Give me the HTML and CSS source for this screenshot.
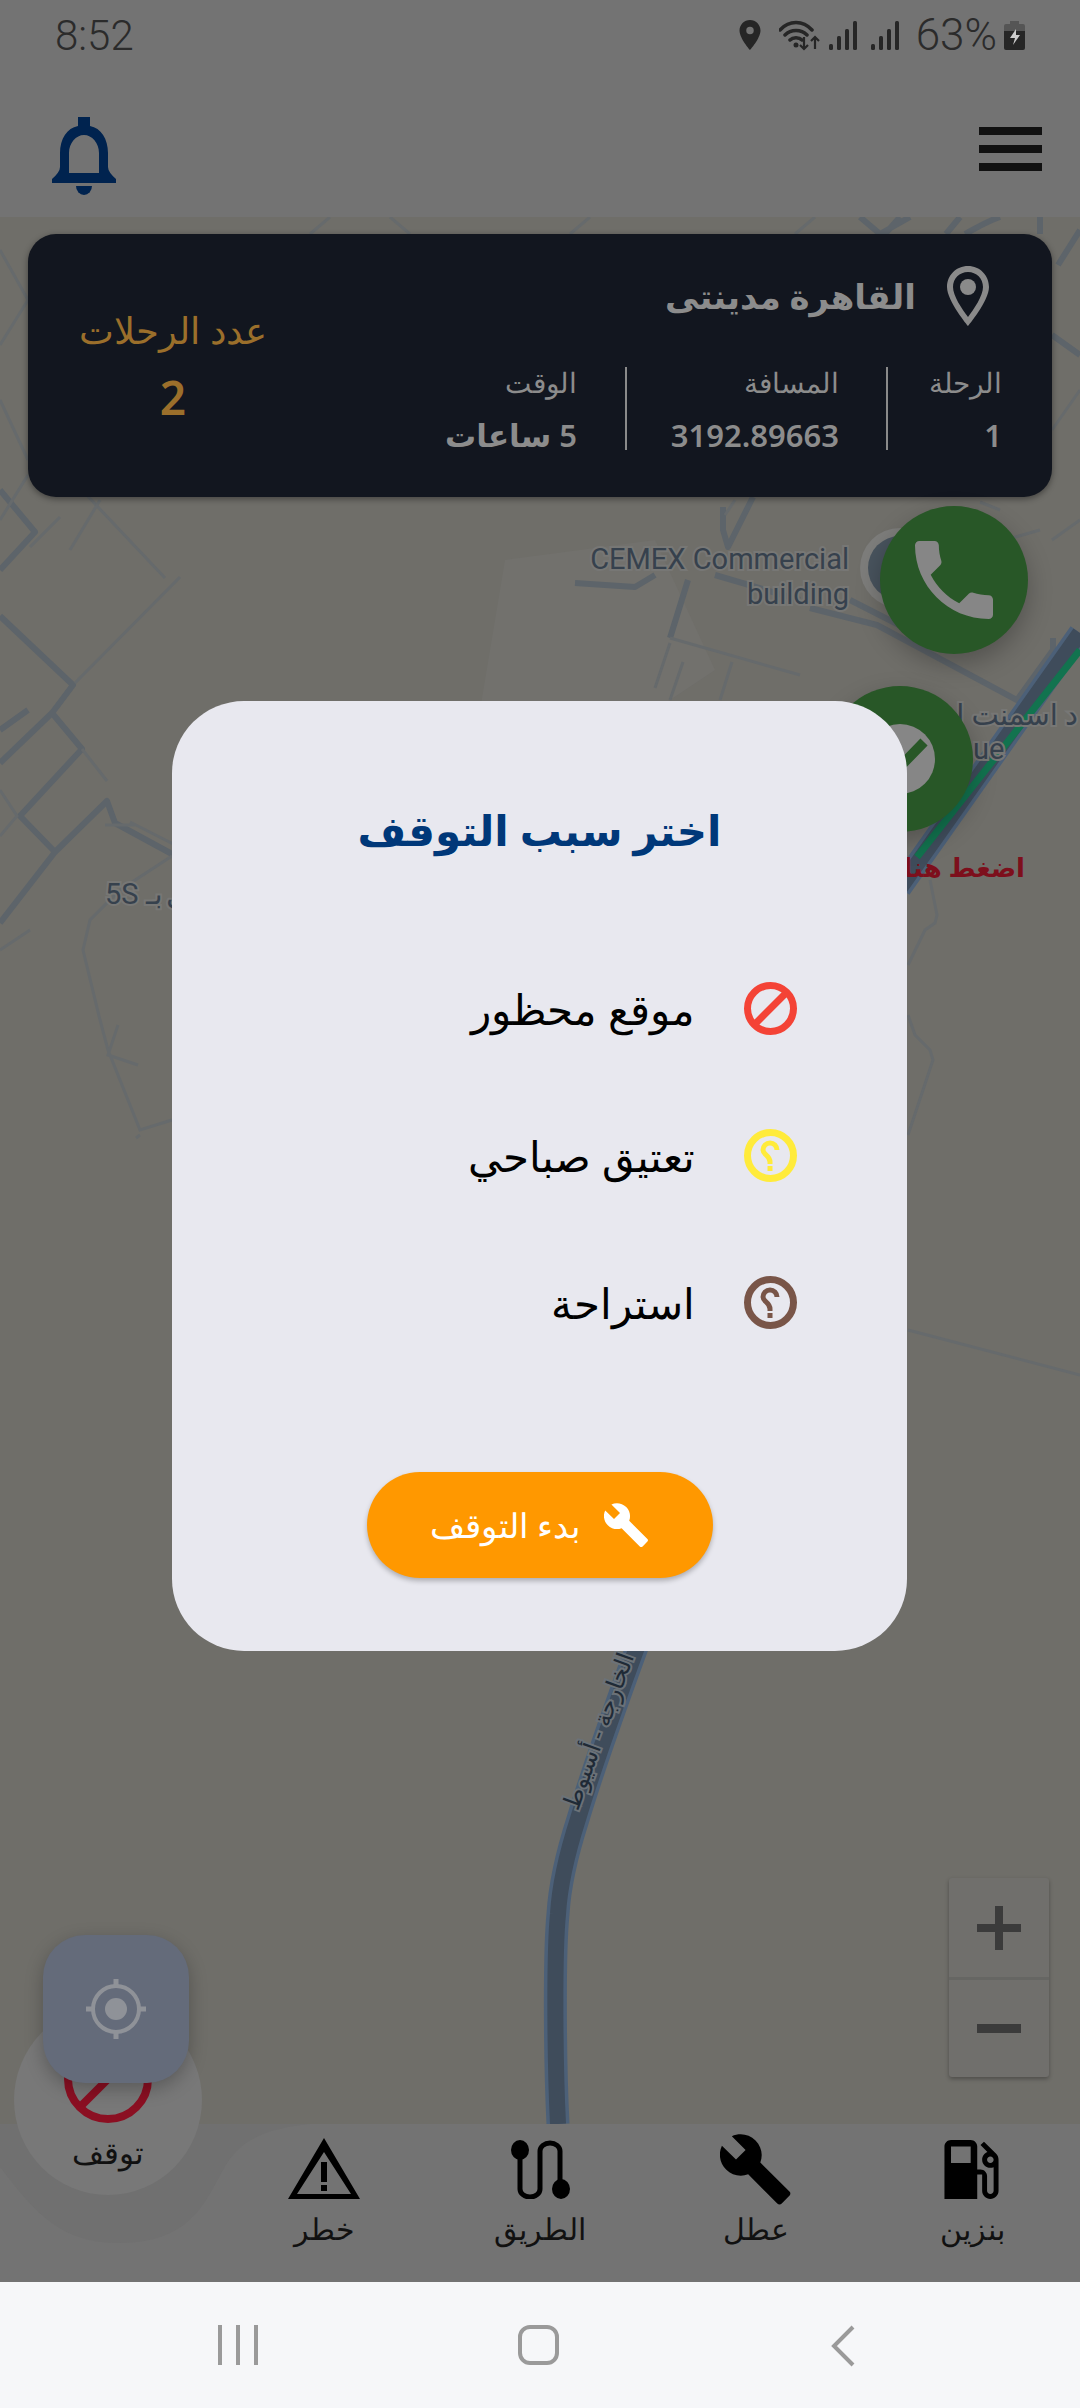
FILE: index.html
```html
<!DOCTYPE html>
<html lang="ar">
<head>
  <meta charset="UTF-8" />
  <meta name="viewport" content="width=device-width, initial-scale=1.0"/>
  <title>اختر سبب التوقف</title>
  <link rel="stylesheet" href="styles.css">
</head>
<body>
  <div class="screen">
    <div class="top">
      <div class="status-bar">
        <span class="clock">8:52</span>
        <div class="status-icons">
          <svg class="st-pin" viewBox="5 2 14 20"><path d="M12 2C8.130 2 5 5.130 5 9c0 5.250 7 13 7 13s7-7.750 7-13c0-3.870-3.130-7-7-7zm0 9.500a2.500 2.500 0 1 1 0-5 2.500 2.500 0 0 1 0 5z"/></svg>
          <svg class="st-wifi" viewBox="0 0 42 31"><path class="st-line" d="M1 10C10 0 24 0 33 10M6 15c6-6 16-6 22 0M11 20c3-3 9-3 12 0"/><circle cx="17" cy="25" r="2.500"/><path class="st-thin" d="M25 17v12M21 25l4 4 4-4M36 29V18M32 21l4-4 4 4"/></svg>
          <svg class="st-signal" viewBox="0 0 28 29"><rect x="0" y="23" width="4" height="6" rx="1.500"/><rect x="8" y="15" width="4" height="14" rx="1.500"/><rect x="16" y="8" width="4" height="21" rx="1.500"/><rect x="24" y="0" width="4" height="29" rx="1.500"/></svg>
          <svg class="st-signal" viewBox="0 0 28 29"><rect x="0" y="23" width="4" height="6" rx="1.500"/><rect x="8" y="15" width="4" height="14" rx="1.500"/><rect x="16" y="8" width="4" height="21" rx="1.500"/><rect x="24" y="0" width="4" height="29" rx="1.500"/></svg>
          <span class="battery-text">63%</span>
          <svg class="st-battery" viewBox="0 0 21 29"><path class="st-batt-empty" d="M6 0h9v3h4a2 2 0 0 1 2 2v5H0V5a2 2 0 0 1 2-2h4z"/><path d="M0 10h21v17a2 2 0 0 1-2 2H2a2 2 0 0 1-2-2z"/><path class="st-bolt" d="M12 8L6 17h5l-2 7 7-10h-4z"/></svg>
        </div>
      </div>
      <div class="app-header">
        <svg class="bell" viewBox="0 0 64 78"><path fill-rule="evenodd" d="M26 0h12v9c11 2 18 13 18 27v14q0 5 8 12v4H0v-4q8-7 8-12V36C8 22 15 11 26 9zM32 18c-8 0-15 8-15 18v20h30V36c0-10-7-18-15-18z"/><path d="M24 69h16a8 9 0 0 1-16 0z"/></svg>
        <div class="menu-icon"><span></span><span></span><span></span></div>
      </div>
    </div>

    <div class="map">
      <svg class="map-art" viewBox="0 217 1080 1907">
        <path class="land" d="M505 560l150-20 60 130-60 40H480z"/>
        <g class="road">
          <path d="M0 490l35 42-35 38M0 616l73 69-21 28-52 50M52 713l30 36-62 67 35 36-55 71M55 852l52-51 8 22 57 31 50 20"/>
          <path d="M723 507v23l5 17 25-50M575 583l60 4 20-12M688 580l-18 58M715 575l85 25M810 608l67 17 140 75 36-50v-12M850 600l55 28 15-14-8-12"/>
          <path d="M900 217l-15 17M860 217l20 17 30-17M960 217l-14 17M1000 217c-15 5-25 12-35 17M1040 217v17M1080 230l-22 35M1052 335l28 20M0 730l28-20"/>
        </g>
        <g class="lane">
          <path d="M180 577L75 683M80 488l85 90M82 749l25 32M0 790l17 26 -17 20M135 825h-30M130 822l55 28"/>
          <path d="M172 856l-52 34-30 30-7 30 17 70 8 30 32 80 32-10M118 1025l-10 30 30 10M140 1135l-4 3"/>
          <path d="M930 880l7 35-2 8-10 7-17 35M908 1015l7 20 15 15 3 10-25 75M908 1330l172 45"/>
          <path d="M670 638l130 37M683 662l-13 38M732 662l-12 38M655 688l15-45M735 500l-10 15M1000 510l-20-8M1040 530l-35 10M330 217l-20 17M390 217l20 17M590 217l-20 17M815 217l-20 17"/>
          <path d="M0 250l28 50M28 300l-28 45M0 400l28 60M0 520l28-45M1052 430l28-40M1052 540l28-20M0 950l30-20M60 517l-30 30M100 500l-30 50"/>
        </g>
        <path class="main-road" d="M558 2124c-3-60-4-170 0-210 2-35 12-70 20-95 15-50 40-120 62-180M900 888l180-255"/>
        <path class="main-road-core" d="M558 2124c-3-60-4-170 0-210 2-35 12-70 20-95 15-50 40-120 62-180M900 888l180-255"/>
        <path class="green-road" d="M917 857l163-207"/>
        <circle class="poi-halo" cx="900" cy="568" r="40"/>
        <circle class="poi" cx="900" cy="568" r="32"/>
        <text class="map-label" x="849" y="569" text-anchor="end">CEMEX Commercial</text>
        <text class="map-label" x="849" y="604" text-anchor="end">building</text>
        <text class="map-label map-rtl" x="1078" y="725">د اسمنت اس</text>
        <text class="map-label" x="973" y="759">ue</text>
        <text class="map-label" x="105" y="904">5S</text>
        <text class="map-label" x="146" y="904">بـ</text>
        <text class="map-label" x="166" y="904">ل</text>
        <text class="road-label" transform="translate(606 1734) rotate(-70)" text-anchor="middle">الخارجة - أسيوط</text>
        <text class="tap-label" x="1025" y="877" text-anchor="end">اضغط هنا</text>
      </svg>

      <div class="trip-card">
        <div class="trip-info">
          <div class="trip-place">
            <svg class="place-pin" viewBox="0 0 42 60"><path fill-rule="evenodd" d="M21 0C9 0 0 9.500 0 21c0 14 21 39 21 39s21-25 21-39C42 9.500 33 0 21 0zm0 6c8.500 0 15 6.500 15 15 0 9-9 22-15 30C15 43 6 30 6 21 6 12.500 12.500 6 21 6z"/><circle cx="21" cy="21" r="8"/></svg>
            <span class="place-name">القاهرة مدينتى</span>
          </div>
          <div class="trip-stats">
            <div class="stat stat-trip"><span>الرحلة</span><b>1</b></div>
            <div class="stat stat-dist"><span>المسافة</span><b>3192.89663</b></div>
            <div class="stat stat-time"><span>الوقت</span><b>5 ساعات</b></div>
          </div>
        </div>
        <div class="trip-count">
          <span>عدد الرحلات</span>
          <b>2</b>
        </div>
      </div>

      <div class="round-btn phone-btn">
        <svg viewBox="3 3 18 18"><path d="M6.620 10.790c1.440 2.830 3.760 5.140 6.590 6.590l2.200-2.200c.27-.27.67-.36 1.020-.24 1.120.37 2.330.57 3.570.57.55 0 1 .45 1 1V20c0 .55-.45 1-1 1-9.390 0-17-7.610-17-17 0-.55.45-1 1-1h3.500c.55 0 1 .45 1 1 0 1.250.2 2.450.57 3.570.11.35.03.74-.25 1.020l-2.200 2.200z"/></svg>
      </div>
      <div class="round-btn check-btn">
        <svg viewBox="0 0 70 70"><circle class="check-disc" cx="35" cy="35" r="35"/><path class="check-mark" d="M10 40l14 14 35-36"/></svg>
      </div>

      <div class="zoom-box">
        <div class="zoom-part"><span class="zoom-plus"></span></div>
        <div class="zoom-part"><span class="zoom-minus"></span></div>
      </div>
    </div>

    <div class="bottom-nav">
      <svg class="nav-curve" viewBox="0 0 320 130"><path d="M0 0h310c-40 4-62 14-76 30-25 28-28 90-117 89C60 118 36 90 0 43z"/></svg>
      <div class="stop-item">
        <svg class="stop-icon" viewBox="0 0 88 88"><circle cx="44" cy="44" r="40"/><path d="M16 72L72 16"/></svg>
        <span>توقف</span>
      </div>
      <div class="nav-slot"></div>
      <div class="nav-item">
        <svg class="nav-alert" viewBox="0 0 72 61"><path fill-rule="evenodd" d="M36 0l36 61H0zm0 14L9 56h54z"/><path d="M33 24h6v20h-6zM33 47h6v6h-6z"/></svg>
        <span>خطر</span>
      </div>
      <div class="nav-item">
        <svg class="nav-route" viewBox="0 0 59 59"><ellipse cx="9" cy="10" rx="9" ry="10"/><ellipse cx="50" cy="49" rx="9" ry="10"/><path class="route-line" d="M9 12v37a10 8 0 0 0 20 0V11a10 8 0 0 1 20 0v37"/></svg>
        <span>الطريق</span>
      </div>
      <div class="nav-item">
        <svg class="nav-wrench" viewBox="1 1 22.500 22.500"><path d="M22.700 19l-9.100-9.100c.9-2.300.4-5-1.500-6.900-2-2-5-2.400-7.400-1.300L9 6 6 9 1.600 4.700C.4 7.100.9 10.100 2.900 12.100c1.900 1.900 4.600 2.400 6.900 1.500l9.100 9.100c.4.4 1 .4 1.400 0l2.300-2.300c.5-.4.5-1.100.1-1.400z"/></svg>
        <span>عطل</span>
      </div>
      <div class="nav-item">
        <svg class="nav-gas" viewBox="4 3 16.500 18"><path d="M19.770 7.230l.01-.01-3.720-3.720L15 4.560l2.110 2.110c-.94.36-1.610 1.260-1.610 2.330 0 1.380 1.120 2.500 2.500 2.500.36 0 .69-.08 1-.21v7.210c0 .55-.45 1-1 1s-1-.45-1-1V14c0-1.100-.9-2-2-2h-1V5c0-1.100-.9-2-2-2H6c-1.100 0-2 .9-2 2v16h10v-7.500h1.500v5c0 1.380 1.120 2.500 2.500 2.500s2.500-1.120 2.500-2.500V9c0-.69-.28-1.320-.73-1.770zM12 10H6V5h6v5zm6 0c-.55 0-1-.45-1-1s.45-1 1-1 1 .45 1 1-.45 1-1 1z"/></svg>
        <span>بنزين</span>
      </div>
    </div>

    <div class="sys-nav">
      <div class="sys-recents"><span></span><span></span><span></span></div>
      <div class="sys-home"></div>
      <svg class="sys-back" viewBox="0 0 24 42"><path d="M22 2L3 21l19 19"/></svg>
    </div>

    <div class="locate-btn">
      <svg viewBox="0 0 60 60"><circle class="loc-ring" cx="30" cy="30" r="23"/><circle cx="30" cy="30" r="11"/><path class="loc-tick" d="M30 0v7M30 53v7M0 30h7M53 30h7"/></svg>
    </div>

    <div class="overlay">
      <div class="modal">
        <h2 class="modal-title">اختر سبب التوقف</h2>
        <ul class="reason-list">
          <li class="reason reason-banned">
            <svg viewBox="0 0 53 53"><circle class="ring" cx="26.500" cy="26.500" r="23"/><path class="ring" d="M10 43L43 10"/></svg>
            <span>موقع محظور</span>
          </li>
          <li class="reason reason-morning">
            <svg viewBox="0 0 53 53"><circle class="ring" cx="26.500" cy="26.500" r="23"/><path class="hook" d="M33 21a7 7 0 1 0-14 0c0 5 7 5 7 12v2"/><rect class="dot" x="23.500" y="37" width="5" height="5"/></svg>
            <span>تعتيق صباحي</span>
          </li>
          <li class="reason reason-rest">
            <svg viewBox="0 0 53 53"><circle class="ring" cx="26.500" cy="26.500" r="23"/><path class="hook" d="M33 21a7 7 0 1 0-14 0c0 5 7 5 7 12v2"/><rect class="dot" x="23.500" y="37" width="5" height="5"/></svg>
            <span>استراحة</span>
          </li>
        </ul>
        <button class="start-btn">
          <svg viewBox="1 1 22.500 22.500"><path d="M22.700 19l-9.100-9.100c.9-2.300.4-5-1.500-6.900-2-2-5-2.400-7.400-1.300L9 6 6 9 1.600 4.700C.4 7.100.9 10.100 2.900 12.100c1.900 1.900 4.600 2.400 6.900 1.500l9.100 9.100c.4.4 1 .4 1.400 0l2.300-2.300c.5-.4.5-1.100.1-1.400z"/></svg>
          <span>بدء التوقف</span>
        </button>
      </div>
    </div>
  </div>
</body>
</html>
```

FILE: styles.css
```css
* {
  box-sizing: border-box;
}
body {
  margin: 0;
  font-family: "Noto Sans", "DejaVu Sans", sans-serif;
  font-weight: 300;
  background: #737373;
}
svg {
  display: block;
}
.screen {
  position: relative;
  display: flex;
  flex-direction: column;
  width: 1080px;
  height: 2408px;
  overflow: hidden;
}

/* top */
.top {
  height: 217px;
  background: #737373;
}
.status-bar {
  display: flex;
  justify-content: space-between;
  align-items: center;
  height: 70px;
  padding: 0 55px;
  color: #2b2b2b;
  font-family: Roboto, sans-serif;
  font-size: 42px;
}
.status-icons {
  display: flex;
  align-items: center;
  fill: #262626;
}
.st-pin {
  width: 24px;
  height: 30px;
  margin-right: 17px;
}
.st-wifi {
  width: 42px;
  height: 31px;
  margin-right: 8px;
}
.st-line {
  fill: none;
  stroke: #262626;
  stroke-width: 3.500;
  stroke-linecap: round;
}
.st-thin {
  fill: none;
  stroke: #262626;
  stroke-width: 2.200;
}
.st-signal {
  width: 28px;
  height: 29px;
  margin-right: 14px;
}
.battery-text {
  margin: 0 7px 0 3px;
  font-size: 44px;
  font-weight: 300;
}
.st-battery {
  width: 21px;
  height: 29px;
}
.st-batt-empty {
  fill: #555;
}
.st-bolt {
  fill: #ccc;
}
.app-header {
  display: flex;
  justify-content: space-between;
  align-items: flex-start;
  padding: 47px 38px 0 52px;
}
.bell {
  width: 64px;
  height: 78px;
  fill: #00234f;
}
.menu-icon {
  display: flex;
  flex-direction: column;
  gap: 10px;
  width: 63px;
  margin-top: 10px;
}
.menu-icon span {
  height: 8px;
  background: #111;
}

/* map */
.map {
  position: relative;
  flex: 1;
  padding: 17px 28px;
  background: #6f6e69;
}
.map-art {
  position: absolute;
  top: 0;
  left: 0;
  width: 1080px;
  height: 1907px;
}
.land {
  fill: #72716d;
}
.road path {
  fill: none;
  stroke: #5d646a;
  stroke-width: 6;
  stroke-linejoin: round;
}
.lane path {
  fill: none;
  stroke: #666a6c;
  stroke-width: 3;
}
.main-road {
  fill: none;
  stroke: #4c6078;
  stroke-width: 23;
}
.main-road-core {
  fill: none;
  stroke: #3f4c5b;
  stroke-width: 16;
}
.green-road {
  fill: none;
  stroke: #12734f;
  stroke-width: 7;
}
.poi-halo {
  fill: #7d7d7b;
}
.poi {
  fill: #48535d;
}
.map-label {
  fill: #36414d;
  stroke: #777775;
  stroke-width: 4;
  paint-order: stroke;
  font-family: Roboto, "Noto Sans", "DejaVu Sans", sans-serif;
  font-size: 29px;
  font-weight: 400;
}
.map-rtl {
  direction: rtl;
}
.road-label {
  fill: #1f2a36;
  stroke: #6b7278;
  stroke-width: 4;
  paint-order: stroke;
  font-size: 24px;
  font-weight: 400;
}
.tap-label {
  fill: #7d0f1c;
  font-size: 26px;
  font-weight: 600;
}

/* trip card */
.trip-card {
  position: relative;
  display: flex;
  justify-content: space-between;
  direction: rtl;
  height: 263px;
  padding: 32px 50px 0 50px;
  background: #12161f;
  border-radius: 28px;
  box-shadow: 0 2px 6px rgba(0, 0, 0, 0.4);
}
.trip-place {
  display: flex;
  align-items: center;
  gap: 31px;
  padding-right: 13px;
  color: #8c8c8c;
}
.place-pin {
  width: 42px;
  height: 60px;
  fill: #8a8a8a;
}
.place-name {
  font-size: 34px;
  font-weight: 700;
}
.trip-stats {
  display: flex;
  margin-top: 41px;
  color: #8c8c8c;
}
.stat {
  display: flex;
  flex-direction: column;
  justify-content: space-between;
  height: 83px;
  font-size: 28px;
  line-height: 30px;
}
.stat b {
  font-size: 31px;
  font-weight: 600;
}
.stat-trip {
  width: 116px;
  border-left: 2px solid #8a8a8a;
}
.stat-dist {
  width: 261px;
  padding-right: 47px;
  border-left: 2px solid #8a8a8a;
}
.stat-time {
  padding-right: 48px;
}
.trip-count {
  display: flex;
  flex-direction: column;
  align-items: center;
  gap: 22px;
  width: 190px;
  margin-top: 38px;
  color: #9b6f2b;
  font-size: 37px;
}
.trip-count b {
  font-size: 46px;
  line-height: 40px;
  font-weight: 600;
}

/* floating buttons on the map */
.round-btn {
  position: absolute;
  display: flex;
  justify-content: center;
  align-items: center;
  border-radius: 50%;
  background: #285727;
  box-shadow: 0 10px 24px rgba(0, 0, 0, 0.25);
}
.phone-btn {
  top: 289px;
  left: 880px;
  width: 148px;
  height: 148px;
}
.phone-btn svg {
  width: 78px;
  height: 78px;
  fill: #868686;
}
.check-btn {
  top: 469px;
  left: 827px;
  width: 146px;
  height: 146px;
}
.check-btn svg {
  width: 70px;
  height: 70px;
}
.check-disc {
  fill: #868686;
}
.check-mark {
  fill: none;
  stroke: #285727;
  stroke-width: 10;
}
.zoom-box {
  position: absolute;
  top: 1661px;
  left: 949px;
  width: 100px;
  height: 199px;
  background: #706f6c;
  border-radius: 3px;
  box-shadow: 0 2px 4px rgba(0, 0, 0, 0.3);
}
.zoom-part {
  display: flex;
  justify-content: center;
  align-items: center;
  height: 99px;
}
.zoom-part + .zoom-part {
  height: 100px;
  border-top: 3px solid #666663;
}
.zoom-plus {
  position: relative;
  width: 44px;
  height: 8px;
  background: #3b3b3b;
}
.zoom-plus::after {
  content: "";
  position: absolute;
  top: -18px;
  left: 18px;
  width: 8px;
  height: 44px;
  background: #3b3b3b;
}
.zoom-minus {
  width: 44px;
  height: 9px;
  background: #3b3b3b;
}

/* bottom nav */
.bottom-nav {
  position: relative;
  display: grid;
  grid-template-columns: repeat(5, 216px);
  height: 158px;
  background: #737373;
}
.nav-curve {
  position: absolute;
  top: 0;
  left: 0;
  width: 320px;
  height: 130px;
  fill: #707070;
}
.nav-item {
  position: relative;
  display: flex;
  flex-direction: column;
  align-items: center;
  justify-content: flex-end;
  height: 128px;
  color: #111;
  font-size: 30px;
  line-height: 34px;
}
.nav-item span {
  margin-bottom: 6px;
}
.nav-item svg {
  position: absolute;
  top: 16px;
}
.nav-alert {
  width: 72px;
  height: 61px;
  margin-top: -2px;
}
.nav-route {
  width: 59px;
  height: 59px;
}
.route-line {
  fill: none;
  stroke: #000;
  stroke-width: 5;
}
.nav-wrench {
  width: 72px;
  height: 72px;
  margin-top: -6px;
}
.nav-gas {
  width: 55px;
  height: 59px;
  margin-left: -2px;
}
.stop-item {
  position: absolute;
  bottom: 87px;
  left: 14px;
  display: flex;
  flex-direction: column;
  align-items: center;
  width: 188px;
  height: 190px;
  padding-top: 30px;
  border-radius: 50%;
  background: #787878;
  color: #111;
  font-size: 31px;
  line-height: 34px;
}
.stop-icon {
  width: 88px;
  height: 88px;
  margin-bottom: 12px;
  fill: none;
  stroke: #8b0f22;
  stroke-width: 8;
}
.sys-nav {
  position: relative;
  height: 126px;
  background: #f6f7f9;
}
.sys-recents {
  position: absolute;
  top: 43px;
  left: 218px;
  display: flex;
  gap: 14px;
}
.sys-recents span {
  width: 4px;
  height: 40px;
  background: #9a9a9a;
}
.sys-home {
  position: absolute;
  top: 43px;
  left: 518px;
  width: 41px;
  height: 40px;
  border: 4px solid #9a9a9a;
  border-radius: 12px;
}
.sys-back {
  position: absolute;
  top: 43px;
  left: 831px;
  width: 24px;
  height: 42px;
  fill: none;
  stroke: #9a9a9a;
  stroke-width: 4;
}

/* over the map */
.locate-btn {
  position: absolute;
  top: 1935px;
  left: 43px;
  display: flex;
  justify-content: center;
  align-items: center;
  width: 146px;
  height: 148px;
  background: #646b7a;
  border-radius: 42px;
  box-shadow: 0 6px 18px rgba(0, 0, 0, 0.25);
}
.locate-btn svg {
  width: 60px;
  height: 60px;
  fill: #8f9298;
}
.loc-ring {
  fill: none;
  stroke: #8f9298;
  stroke-width: 4;
}
.loc-tick {
  stroke: #8f9298;
  stroke-width: 5;
}
.overlay {
  position: absolute;
  top: 701px;
  left: 172px;
}
.modal {
  display: flex;
  flex-direction: column;
  align-items: center;
  width: 735px;
  height: 950px;
  padding-top: 94px;
  background: #e8e8ef;
  border-radius: 72px;
}
.modal-title {
  margin: 0;
  color: #003879;
  font-size: 42px;
  font-weight: 700;
  line-height: 70px;
}
.reason-list {
  width: 100%;
  margin: 70px 0 0;
  padding: 0;
  list-style: none;
}
.reason {
  display: flex;
  flex-direction: row-reverse;
  align-items: center;
  gap: 49px;
  height: 147px;
  padding-right: 110px;
  color: #000;
  font-size: 42px;
}
.reason svg {
  width: 53px;
  height: 53px;
}
.ring {
  fill: none;
  stroke-width: 7;
}
.hook {
  fill: none;
  stroke-width: 5;
}
.reason-banned .ring {
  stroke: #f44336;
}
.reason-morning .ring,
.reason-morning .hook {
  stroke: #ffeb3b;
}
.reason-morning .dot {
  fill: #ffeb3b;
}
.reason-rest .ring,
.reason-rest .hook {
  stroke: #795548;
}
.reason-rest .dot {
  fill: #795548;
}
.start-btn {
  display: flex;
  flex-direction: row-reverse;
  justify-content: center;
  align-items: center;
  gap: 24px;
  width: 346px;
  height: 106px;
  margin-top: 96px;
  border: 0;
  border-radius: 53px;
  background: #ff9800;
  color: #fff;
  font-family: inherit;
  font-size: 34px;
  font-weight: 300;
  box-shadow: 0 3px 5px rgba(0, 0, 0, 0.25);
}
.start-btn svg {
  width: 45px;
  height: 45px;
  fill: #fff;
}
```
